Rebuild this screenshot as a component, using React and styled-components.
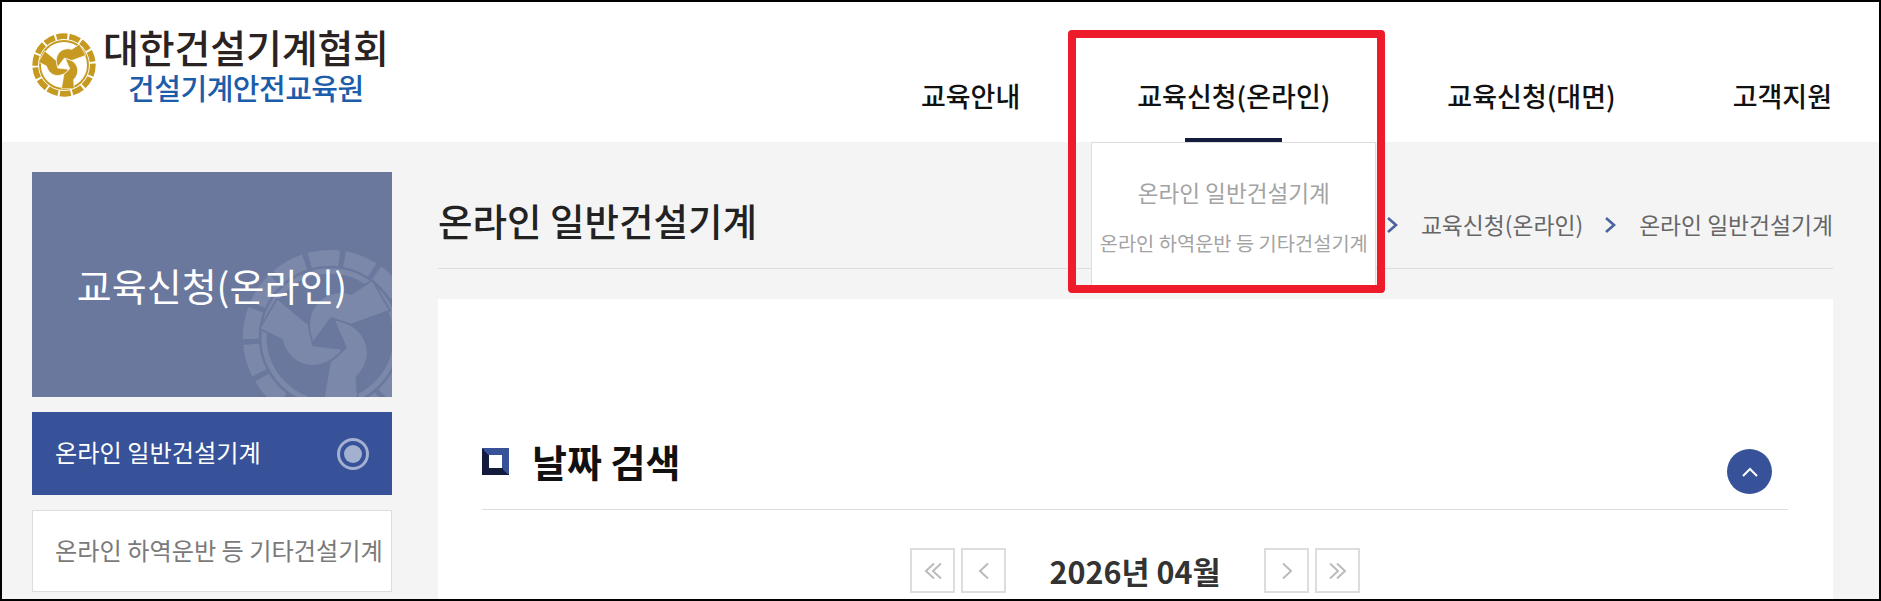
import React from "react";
import styled, { createGlobalStyle } from "styled-components";

const Global = createGlobalStyle`
  html, body { margin: 0; padding: 0; background: #000; }
  body { font-family: "Noto Sans CJK KR", "Noto Sans", sans-serif; }
  * { box-sizing: border-box; }
`;
const Page = styled.div`
  position: relative; width: 1881px; height: 601px; overflow: hidden;
  border: 2px solid #000; background: #f4f4f4;
`;
const Header = styled.header`
  height: 140px; background: #fff; display: flex; justify-content: space-between;
  padding: 0 47px 0 30px;
`;
const Logo = styled.div`display: flex; align-items: flex-start; padding-top: 23px;`;
const LogoMark = styled.svg`width: 64px; height: 64px; margin-top: 8px; flex: none;`;
const LogoText = styled.div`display: flex; flex-direction: column; align-items: center; margin-left: 7px;`;
const LogoTitle = styled.div`font-size: 39px; line-height: 42px; font-weight: 500; color: #2b2222; letter-spacing: -0.15px;`;
const LogoSub = styled.div`font-size: 29px; line-height: 34px; margin-top: 3px; font-weight: 500; color: #1b5daa; letter-spacing: -0.5px;`;
const Nav = styled.nav`display: flex; align-items: stretch; gap: 117px;`;
const NavItem = styled.div`
  position: relative; display: flex; align-items: flex-start; padding-top: 76px;
  font-size: 27px; line-height: 36px; font-weight: 500; color: #111; white-space: nowrap;
`;
const NavBar = styled.span`
  position: absolute; left: 48px; bottom: 0; width: 97px; height: 4px; background: #141c3d;
`;
const Dropdown = styled.div`
  position: absolute; left: -46px; top: 140px; width: 285px; height: 151px; z-index: 2;
  background: #fff; border: 1px solid #ddd; display: flex; flex-direction: column; align-items: center;
  color: #a3a3a3; font-weight: 400;
`;
const DropA = styled.div`font-size: 22.6px; line-height: 30px; margin-top: 35px;`;
const DropB = styled.div`font-size: 19.8px; line-height: 28px; margin-top: 21px;`;
const Body = styled.div`display: flex; gap: 46px; padding: 30px 46px 0 30px;`;
const Side = styled.aside`width: 360px; flex: none; display: flex; flex-direction: column;`;
const Banner = styled.div`
  position: relative; height: 225px; background: #6a789d; color: #fff; overflow: hidden;
  display: flex; align-items: center; justify-content: center;
  font-size: 38px; font-weight: 400; line-height: 44px;
`;
const BannerTitle = styled.span`position: relative; z-index: 1;`;
const Watermark = styled.svg`position: absolute; left: 210px; top: 77px; width: 176px; height: 176px;`;
const SideItem = styled.div`
  height: ${p => p.$active ? 83 : 82}px; margin-top: 15px;
  display: flex; align-items: center; justify-content: space-between;
  padding: ${p => p.$active ? "0 23px 4px" : "0 22px 2px"};
  font-size: 24.2px; line-height: 30px; white-space: nowrap;
  background: ${p => p.$active ? "#375298" : "#fff"};
  color: ${p => p.$active ? "#fff" : "#7a7a7a"};
  border: ${p => p.$active ? "none" : "1px solid #ddd"};
`;
const Radio = styled.span`
  width: 32px; height: 32px; border-radius: 50%; border: 3px solid #a3b0d0; flex: none;
  display: flex; align-items: center; justify-content: center; margin: 4px 0 0 0;
  &::after { content: ""; width: 18px; height: 18px; border-radius: 50%; background: #a3b0d0; }
`;
const Main = styled.main`width: 1395px; flex: none;`;
const TopRow = styled.div`
  height: 97px; margin-bottom: 30px; display: flex; justify-content: space-between; align-items: center;
  border-bottom: 1px solid #ddd;
`;
const PageTitle = styled.h1`margin: 0; font-size: 37.5px; line-height: 50px; font-weight: 500; color: #222;`;
const Crumbs = styled.div`display: flex; align-items: center; gap: 21px; margin-top: 10px; font-size: 22.8px; line-height: 30px; color: #666;`;
const Chevron = styled.svg`width: 14px; height: 20px; flex: none;`;
const Panel = styled.section`background: #fff; height: 320px; padding: 138px 45px 0 44px;`;
const SectionHead = styled.div`
  position: relative; height: 73px; border-bottom: 1px solid #ddd; display: flex; align-items: flex-start; gap: 23px;
`;
const Square = styled.span`
  width: 27px; height: 27px; margin-top: 11px; flex: none; display: flex; align-items: center; justify-content: center;
  background: linear-gradient(to top right, #141c3d 50%, #375298 50%);
  &::after { content: ""; width: 13px; height: 13px; background: #fff; }
`;
const SectionTitle = styled.h2`margin: -1px 0 0; font-size: 38px; line-height: 50px; font-weight: 700; color: #111;`;
const Collapse = styled.button`
  position: absolute; right: 16px; top: 12px; width: 45px; height: 45px; border-radius: 50%; border: 0;
  background: #375298; padding: 0; display: flex; align-items: center; justify-content: center;
`;
const DateRow = styled.div`display: flex; justify-content: center; align-items: center; margin-top: 38px;`;
const Pager = styled.button`
  width: 45px; height: 45px; background: #fff; border: 2px solid #ddd; padding: 0;
  margin-left: ${p => p.$gap || 0}px; display: flex; align-items: center; justify-content: center;
`;
const DateText = styled.div`
  font-size: 30.5px; line-height: 44px; font-weight: 700; color: #333; width: 258px; text-align: center;
`;
const Callout = styled.div`
  position: absolute; left: 1066px; top: 28px; width: 317px; height: 263px; z-index: 5;
  border: 8px solid #ee1c2b; border-radius: 4px;
`;

const Gear = ({ color, gap }) => (
  <>
    <circle cx="50" cy="50" r="45" fill="none" stroke={color} strokeWidth="9" strokeDasharray="17 3" />
    <circle cx="50" cy="50" r="37.5" fill="none" stroke={color} strokeWidth="3" />
    {[0, 120, 240].map(a => (
      <g key={a} transform={`rotate(${a} 50 50)`}>
        <path
          d="M52 40 C70 42 78 60 65 73 L66 87 L46 87 L50 64 L59 56 Z"
          fill={color}
          stroke={gap}
          strokeWidth="1"
        />
      </g>
    ))}
  </>
);

const Chev = ({ dir = "right", dbl, color = "#bbb", size = 20 }) => (
  <svg width={size} height={size} viewBox="0 0 20 20" fill="none" stroke={color} strokeWidth="2">
    <g transform={dir === "left" ? "matrix(-1 0 0 1 20 0)" : undefined}>
      {dbl ? (
        <>
          <path d="M2 2.5 L10 10 L2 17.5" />
          <path d="M9 2.5 L17 10 L9 17.5" />
        </>
      ) : (
        <path d="M6 2.5 L14 10 L6 17.5" />
      )}
    </g>
  </svg>
);

const Arrow = () => (
  <Chevron viewBox="0 0 14 20" fill="none" stroke="#4a639f" strokeWidth="2.6">
    <path d="M2 3 L10 10 L2 17" />
  </Chevron>
);

export default function App() {
  return (
    <Page>
      <Global />
      <Header>
        <Logo>
          <LogoMark viewBox="0 0 100 100">
            <Gear color="#c69a20" gap="#fff" />
          </LogoMark>
          <LogoText>
            <LogoTitle>대한건설기계협회</LogoTitle>
            <LogoSub>건설기계안전교육원</LogoSub>
          </LogoText>
        </Logo>
        <Nav>
          <NavItem>교육안내</NavItem>
          <NavItem>
            교육신청(온라인)
            <NavBar />
            <Dropdown>
              <DropA>온라인 일반건설기계</DropA>
              <DropB>온라인 하역운반 등 기타건설기계</DropB>
            </Dropdown>
          </NavItem>
          <NavItem>교육신청(대면)</NavItem>
          <NavItem>고객지원</NavItem>
        </Nav>
      </Header>
      <Body>
        <Side>
          <Banner>
            <Watermark viewBox="0 0 100 100">
              <Gear color="#7b88aa" gap="#6a789d" />
            </Watermark>
            <BannerTitle>교육신청(온라인)</BannerTitle>
          </Banner>
          <SideItem $active>
            온라인 일반건설기계
            <Radio />
          </SideItem>
          <SideItem>온라인 하역운반 등 기타건설기계</SideItem>
        </Side>
        <Main>
          <TopRow>
            <PageTitle>온라인 일반건설기계</PageTitle>
            <Crumbs>
              <Arrow />
              교육신청(온라인)
              <Arrow />
              온라인 일반건설기계
            </Crumbs>
          </TopRow>
          <Panel>
            <SectionHead>
              <Square />
              <SectionTitle>날짜 검색</SectionTitle>
              <Collapse>
                <svg width="18" height="12" viewBox="0 0 18 12" fill="none" stroke="#fff" strokeWidth="2">
                  <path d="M2 10 L9 3 L16 10" />
                </svg>
              </Collapse>
            </SectionHead>
            <DateRow>
              <Pager><Chev dir="left" dbl /></Pager>
              <Pager $gap={6}><Chev dir="left" /></Pager>
              <DateText>2026년 04월</DateText>
              <Pager><Chev /></Pager>
              <Pager $gap={6}><Chev dbl /></Pager>
            </DateRow>
          </Panel>
        </Main>
      </Body>
      <Callout />
    </Page>
  );
}
